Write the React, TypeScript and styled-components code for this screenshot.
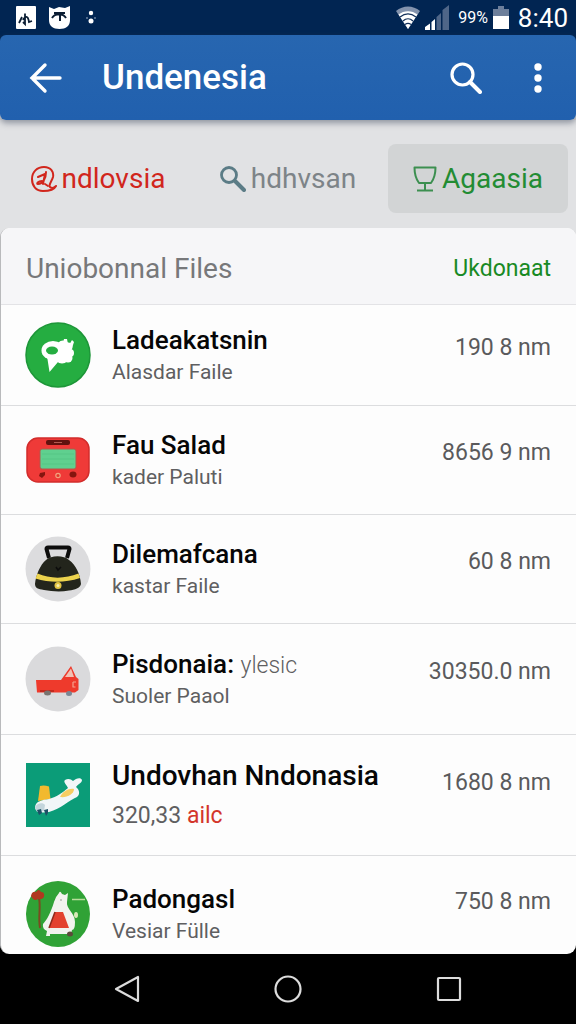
import React from "react";
import styled, { createGlobalStyle } from "styled-components";

const GlobalStyle = createGlobalStyle`
  * { box-sizing: border-box; }
  html, body { margin: 0; background: #000; }
  body { font-family: Roboto, "Liberation Sans", sans-serif; }
  button { font: inherit; border: 0; padding: 0; background: none; cursor: pointer; }
  ul { list-style: none; margin: 0; padding: 0; }
  svg { display: block; flex: none; }
`;

const Screen = styled.div`
  display: flex;
  flex-direction: column;
  min-height: 100vh;
`;

const StatusBar = styled.div`
  display: flex;
  align-items: center;
  justify-content: space-between;
  height: 35px;
  padding: 0 8px 0 16px;
  background: #012552;
  color: #fff;
`;

const StatusGroup = styled.div<{ $gap: number }>`
  display: flex;
  align-items: center;
  gap: ${(p) => p.$gap}px;
`;

const Battery = styled.span`
  margin-left: 4px;
  font-size: 16px;
  line-height: 28px;
`;

const Clock = styled.span`
  margin-left: 4px;
  font-size: 26px;
  line-height: 32px;
`;

const HeaderShell = styled.div`
  background: linear-gradient(#012552 50%, #d4d5d7 50%);
`;

const AppBar = styled.header`
  display: flex;
  align-items: center;
  height: 85px;
  padding: 0 24px;
  border-radius: 6px;
  background: linear-gradient(#2766b0, #2160ae);
  color: #fff;
  box-shadow: 0 3px 6px rgba(60, 70, 90, 0.5);
  position: relative;
`;

const IconButton = styled.button`
  display: flex;
  align-items: center;
  justify-content: center;
  width: 44px;
  height: 48px;
  color: inherit;
`;

const ScreenTitle = styled.h1`
  flex: 1;
  margin: 0 0 0 34px;
  font-size: 35px;
  line-height: 44px;
  font-weight: 500;
`;

const Actions = styled.div`
  display: flex;
  gap: 28px;
  margin-right: -8px;
`;

const Tabs = styled.nav`
  display: grid;
  grid-template-columns: repeat(3, 1fr);
  gap: 10px;
  padding: 24px 8px 15px;
  background: #e1e2e4;
`;

const Tab = styled.button<{ $color: string; $active?: boolean }>`
  display: flex;
  align-items: center;
  justify-content: center;
  gap: 5px;
  height: 69px;
  border-radius: 8px;
  font-size: 28px;
  line-height: 36px;
  color: ${(p) => p.$color};
  background: ${(p) => (p.$active ? "#d2d4d5" : "transparent")};
`;

const CardShell = styled.main`
  background: linear-gradient(#e1e2e4 50%, #000 50%);
`;

const Card = styled.section`
  border-left: 1px solid #b9babc;
  border-radius: 9px;
  background: #fdfdfd;
  overflow: hidden;
`;

const CardHeader = styled.div`
  display: flex;
  align-items: center;
  justify-content: space-between;
  height: 77px;
  padding: 5px 25px 0;
  background: #f6f6f8;
  border-bottom: 1px solid #e3e3e6;
`;

const CardTitle = styled.h2`
  margin: 0;
  font-size: 28px;
  line-height: 36px;
  font-weight: 400;
  color: #77787a;
`;

const CardAction = styled.button`
  font-size: 23px;
  line-height: 32px;
  color: #188a24;
`;

const Row = styled.li<{ $pad: number }>`
  display: flex;
  align-items: center;
  gap: 21px;
  padding: ${(p) => p.$pad}px 25px ${(p) => p.$pad}px 24px;
  border-bottom: 1px solid #dcdddf;

  &:last-child {
    padding-bottom: 6px;
    border-bottom: 0;
  }
`;

const RowText = styled.div`
  flex: 1;
  min-width: 0;
  padding-top: 2px;
`;

const RowTitle = styled.div<{ $large?: boolean }>`
  font-size: ${(p) => (p.$large ? 28 : 26)}px;
  line-height: ${(p) => (p.$large ? 40 : 32)}px;
  font-weight: 500;
  color: #060606;
  white-space: nowrap;
`;

const RowSub = styled.div<{ $large?: boolean }>`
  font-size: ${(p) => (p.$large ? 23 : 21)}px;
  line-height: ${(p) => (p.$large ? 40 : 32)}px;
  color: #5f5f61;
`;

const Note = styled.span`
  font-size: 23px;
  line-height: 24px;
  font-weight: 300;
  color: #5f5f61;
`;

const Alert = styled.span`
  color: #d3352b;
`;

const Amount = styled.div<{ $raised?: boolean }>`
  padding-bottom: ${(p) => (p.$raised ? 24 : 14)}px;
  font-size: 23px;
  line-height: 32px;
  color: #5a5a5c;
  white-space: nowrap;
`;

const NavBar = styled.nav`
  display: grid;
  grid-template-columns: repeat(3, 1fr);
  justify-items: center;
  align-items: center;
  height: 69px;
  padding: 0 46px;
  background: #000;
  color: #dcdcdc;
`;

const ChatIcon = () => (
  <svg width="66" height="66" viewBox="0 0 66 66">
    <circle cx="33" cy="33" r="32" fill="#25ad41" stroke="#1d9638" strokeWidth="1.5" />
    <g fill="#fff">
      <ellipse cx="28" cy="28.500" rx="11.500" ry="9.500" />
      <circle cx="38" cy="25" r="6.500" />
      <circle cx="43" cy="25" r="4.500" />
      <circle cx="45" cy="31" r="4" />
      <circle cx="43" cy="36" r="4.500" />
      <circle cx="37" cy="34" r="7.500" />
      <path d="M22 34L24.500 50L33 40L38 38L30 30Z" />
      <path d="M38 21L39 17L42 17L43 22ZM44 23L47 18L49 20L47 26Z" />
    </g>
    <ellipse cx="27" cy="28.500" rx="6" ry="4" fill="#25ad41" />
  </svg>
);

const ConsoleIcon = () => (
  <svg width="66" height="48" viewBox="0 0 66 48">
    <rect x="2" y="2" width="62" height="44" rx="11" fill="#ef3a38" stroke="#d22c2b" strokeWidth="1.500" />
    <rect x="21" y="4" width="24" height="5" rx="2" fill="#61120f" />
    <path d="M29 6.500h8" stroke="#b35a50" />
    <rect x="15" y="13" width="36" height="20" rx="2" fill="#5fd08f" stroke="#b5564a" strokeWidth="1" />
    <path d="M17 18h32M17 23h32M17 28h32" stroke="#55c383" strokeWidth="0.700" />
    <path d="M15 37l5-1 0 3-3 3-3-2z" fill="#85150f" />
    <ellipse cx="48" cy="38.500" rx="3.500" ry="3" fill="#85150f" />
    <circle cx="33" cy="39.500" r="2.200" fill="#e23a2c" stroke="#f2a27f" strokeWidth="1.200" />
  </svg>
);

const KettleIcon = () => (
  <svg width="66" height="66" viewBox="0 0 66 66">
    <circle cx="33" cy="33" r="32.500" fill="#dcdcde" />
    <path d="M24 22L21.500 13Q21.500 11.500 23 11.500H43Q44.500 11.500 44.500 13L42 22" fill="none" stroke="#0c0c0c" strokeWidth="4" strokeLinejoin="round" />
    <path
      d="M21 24C26 19 39 19 44 24C51 29 55 38 56 48C55 52 50 54 44 54.500C36 56 27 55.500 19 54C13 53 10 52 10 48C11 39 15 29 21 24Z"
      fill="#23251c"
    />
    <path d="M12.500 37.500C25 43 40 43 53.500 37.500L55 42C40 47 25 47 10.500 42.500Z" fill="#ecd34d" />
    <path d="M31 31l2 3 3-3" fill="none" stroke="#0c0c0c" strokeWidth="1.500" />
    <circle cx="33" cy="49.500" r="3.500" fill="#e2c443" />
    <circle cx="33" cy="49.500" r="1.500" fill="#f7ecb0" />
  </svg>
);

const TruckIcon = () => (
  <svg width="66" height="66" viewBox="0 0 66 66">
    <circle cx="33" cy="33" r="32.500" fill="#dadadc" />
    <path d="M11 34H36L46 20L51 31L53.500 33V44L50 46.500H12Z" fill="#ee3a2c" />
    <path d="M40 31L46 22.500L49 31Z" fill="#f1c1b4" />
    <path d="M48 36h3M47.500 41h3M48 36v5" stroke="#f6a18e" strokeWidth="1.200" />
    <path d="M15 45h14" stroke="#b32318" strokeWidth="1.500" />
    <ellipse cx="22.500" cy="47" rx="3.500" ry="2.500" fill="#77736f" />
    <ellipse cx="44" cy="47.500" rx="3" ry="2.500" fill="#7a8794" />
  </svg>
);

const PlaneIcon = () => (
  <svg width="66" height="66" viewBox="0 0 66 66">
    <rect x="1" y="1" width="64" height="64" fill="#0b9c78" />
    <path d="M15 24Q19 23 24 24.500L25.500 37L13 39Z" fill="#f2b92e" />
    <path
      d="M10 45C11 39 17 38 24 37C32 35 38 30 43 26C41 22 38 20 40 18C43 16 46 17 48 19C51 16 56 15 57 18C57 21 53 22 51 25C55 28 55 33 52 35C44 38 36 47 24 50C18 51 10 51 10 45Z"
      fill="#f1f6f8"
    />
    <path d="M35 35C38 29 44 26 49 27C49 32 42 36 35 35Z" fill="#f6cd62" />
    <path d="M10 45C12 41 18 40 20 43L19 49L12 50Z" fill="#c3d5dc" />
    <path d="M12 48l4-1 1 4-3 2zM19 48l4-1 0 4-2 3z" fill="#1d5067" />
  </svg>
);

const BearIcon = () => (
  <svg width="66" height="68" viewBox="0 0 66 68">
    <ellipse cx="33" cy="34" rx="32" ry="33" fill="#30a236" />
    <path d="M14 18C16 28 13 36 15 48" fill="none" stroke="#7b4a20" strokeWidth="2" />
    <path d="M6 16Q7 11 11 12Q14 8 16 12Q20 12 19 17Q17 20 13 19Q9 22 6 16Z" fill="#b0391f" />
    <path d="M47 19.500H60" stroke="#b9dd9c" strokeWidth="1.500" />
    <path
      d="M34 13Q35 10 37 14L40 15L43 13L42 22C41 29 50 33 50 42Q50 50 47 50L46 54H25V56H21L22 51Q17 49 18 44C22 40 26 32 29 22Q31 16 34 13Z"
      fill="#f2f3ee"
    />
    <path d="M30 32H38L44 48H24Z" fill="#e3422e" />
    <path d="M30 32L24 48" stroke="#8d2a1b" strokeWidth="1.500" />
    <circle cx="36" cy="20" r="1" fill="#b6b8b2" />
    <ellipse cx="51" cy="35" rx="2" ry="3" fill="#d8e8b8" />
    <ellipse cx="45" cy="54" rx="3" ry="2.500" fill="#5c4a3a" />
  </svg>
);

type FileRow = {
  icon: React.ReactNode;
  title: string;
  note?: string;
  sub: string;
  alert?: string;
  amount: string;
  pad: number;
  large?: boolean;
  raised?: boolean;
};

const files: FileRow[] = [
  { icon: <ChatIcon />, title: "Ladeakatsnin", sub: "Alasdar Faile", amount: "190 8 nm", pad: 17 },
  { icon: <ConsoleIcon />, title: "Fau Salad", sub: "kader Paluti", amount: "8656 9 nm", pad: 21 },
  { icon: <KettleIcon />, title: "Dilemafcana", sub: "kastar Faile", amount: "60 8 nm", pad: 21 },
  { icon: <TruckIcon />, title: "Pisdonaia:", note: "ylesic", sub: "Suoler Paaol", amount: "30350.0 nm", pad: 22 },
  { icon: <PlaneIcon />, title: "Undovhan Nndonasia", sub: "320,33", alert: "ailc", amount: "1680 8 nm", pad: 19, large: true, raised: true },
  { icon: <BearIcon />, title: "Padongasl", sub: "Vesiar Fülle", amount: "750 8 nm", pad: 24, raised: true },
];

export default function App() {
  return (
    <Screen>
      <GlobalStyle />
      <StatusBar>
        <StatusGroup $gap={13}>
          <svg width="20" height="23" viewBox="0 0 20 23">
            <rect width="20" height="23" rx="1" fill="#fff" />
            <path d="M3 17L6 11M9 7.500V18L7 16M7 14C9 10 12 9 13 16L16 15" fill="none" stroke="#0b1d33" strokeWidth="1.800" />
          </svg>
          <svg width="21" height="23" viewBox="0 0 21 23">
            <path d="M0 1L5 3L10 1L16 2L21 0V14C21 20 17 23 10.500 23S0 20 0 14Z" fill="#fff" />
            <path d="M3 12C6 7 14 7 17 12M5 7H16M11 9V15" fill="none" stroke="#0b1d33" strokeWidth="2" />
          </svg>
          <svg width="20" height="23" viewBox="0 0 20 23">
            <circle cx="8" cy="7" r="2.200" fill="#fff" />
            <circle cx="8" cy="15" r="2.500" fill="#fff" />
            <path d="M3 12h2M11 12h2" stroke="#9fb0c6" />
          </svg>
        </StatusGroup>
        <StatusGroup $gap={5}>
          <svg width="24" height="23" viewBox="0 0 24 23">
            <path d="M0 5C7-1 17-1 24 5L12 23Z" fill="#8393ad" />
            <path d="M2.500 8.500C8 4 16 4 21.500 8.500L12 23Z" fill="#fff" />
            <path d="M4 11C9 7 15 7 20 11M7 15C10 12 14 12 17 15M9 18.500C11 17 13 17 15 18.500" fill="none" stroke="#12305a" strokeWidth="1.200" />
          </svg>
          <svg width="24" height="25" viewBox="0 0 24 25">
            <path d="M0 25V22L5 18.500V25ZM6.500 25V17L10 14V25Z" fill="#fff" />
            <path d="M11.500 25V12L16 8V25ZM17.500 25V5L24 0V25Z" fill="#4f6688" />
          </svg>
          <Battery>99%</Battery>
          <svg width="16" height="23" viewBox="0 0 16 23">
            <path d="M5 0H11V3H16V10H0V3H5Z" fill="#6d7f9b" />
            <path d="M0 10H16V23H0Z" fill="#fff" />
          </svg>
          <Clock>8:40</Clock>
        </StatusGroup>
      </StatusBar>

      <HeaderShell>
        <AppBar>
          <IconButton aria-label="Back">
            <svg width="34" height="32" viewBox="0 0 34 32" fill="none" stroke="currentColor" strokeWidth="3.400" strokeLinecap="round">
              <path d="M3 16H31M16 3L3 16L16 29" />
            </svg>
          </IconButton>
          <ScreenTitle>Undenesia</ScreenTitle>
          <Actions>
            <IconButton aria-label="Search">
              <svg width="32" height="32" viewBox="0 0 32 32" fill="none" stroke="currentColor" strokeWidth="3.200" strokeLinecap="round">
                <circle cx="12.500" cy="12.500" r="10.500" />
                <path d="M20 20L30 30" strokeWidth="4" />
              </svg>
            </IconButton>
            <IconButton aria-label="More options">
              <svg width="8" height="32" viewBox="0 0 8 32" fill="currentColor">
                <circle cx="4" cy="5" r="3.700" />
                <circle cx="4" cy="16" r="3.700" />
                <circle cx="4" cy="27" r="3.700" />
              </svg>
            </IconButton>
          </Actions>
        </AppBar>
      </HeaderShell>

      <Tabs>
        <Tab $color="#d1261c">
          <svg width="26" height="26" viewBox="0 0 26 26" fill="none" stroke="currentColor" strokeWidth="2" strokeLinecap="round">
            <path d="M25 20C23 24 18 25 12 25C5 25 1 20 1 13C1 6 6 1 13 1C20 1 23 6 22 11C21 15 17 19 19 21C21 23 23 22 25 20" />
            <path d="M7 11L14 8L12 18M15 6C15 12 12 18 7 18C5 18 7 15 11 15M14 18L17 20" />
          </svg>
          ndlovsia
        </Tab>
        <Tab $color="#7d8488">
          <svg width="26" height="26" viewBox="0 0 26 26" fill="none" stroke="#5b7c86" strokeLinecap="round">
            <circle cx="9" cy="9" r="7.500" strokeWidth="2.800" />
            <path d="M15 15L24 24" strokeWidth="4" />
          </svg>
          hdhvsan
        </Tab>
        <Tab $color="#238c33" $active aria-current="page">
          <svg width="24" height="26" viewBox="0 0 24 26" fill="none" stroke="#3c8f50" strokeWidth="2" strokeLinejoin="round">
            <path d="M1.500 1.500H22.500C22.500 8 21 13 18 17H6C3 13 1.500 8 1.500 1.500ZM12 17V24M4 24.500H20" />
          </svg>
          Agaasia
        </Tab>
      </Tabs>

      <CardShell>
        <Card>
          <CardHeader>
            <CardTitle>Uniobonnal Files</CardTitle>
            <CardAction>Ukdonaat</CardAction>
          </CardHeader>
          <ul>
            {files.map((f) => (
              <Row key={f.title} $pad={f.pad}>
                {f.icon}
                <RowText>
                  <RowTitle $large={f.large}>
                    {f.title} {f.note && <Note>{f.note}</Note>}
                  </RowTitle>
                  <RowSub $large={f.large}>
                    {f.sub} {f.alert && <Alert>{f.alert}</Alert>}
                  </RowSub>
                </RowText>
                <Amount $raised={f.raised}>{f.amount}</Amount>
              </Row>
            ))}
          </ul>
        </Card>
      </CardShell>

      <NavBar>
        <IconButton aria-label="Back">
          <svg width="26" height="28" viewBox="0 0 26 28" fill="none" stroke="currentColor" strokeWidth="2.200" strokeLinejoin="round">
            <path d="M24 2V26L2 14Z" />
          </svg>
        </IconButton>
        <IconButton aria-label="Home">
          <svg width="28" height="28" viewBox="0 0 28 28" fill="none" stroke="currentColor" strokeWidth="2.200">
            <circle cx="14" cy="14" r="12.500" />
          </svg>
        </IconButton>
        <IconButton aria-label="Recent apps">
          <svg width="26" height="26" viewBox="0 0 26 26" fill="none" stroke="currentColor" strokeWidth="2.200">
            <rect x="2" y="2" width="22" height="22" rx="1" />
          </svg>
        </IconButton>
      </NavBar>
    </Screen>
  );
}
